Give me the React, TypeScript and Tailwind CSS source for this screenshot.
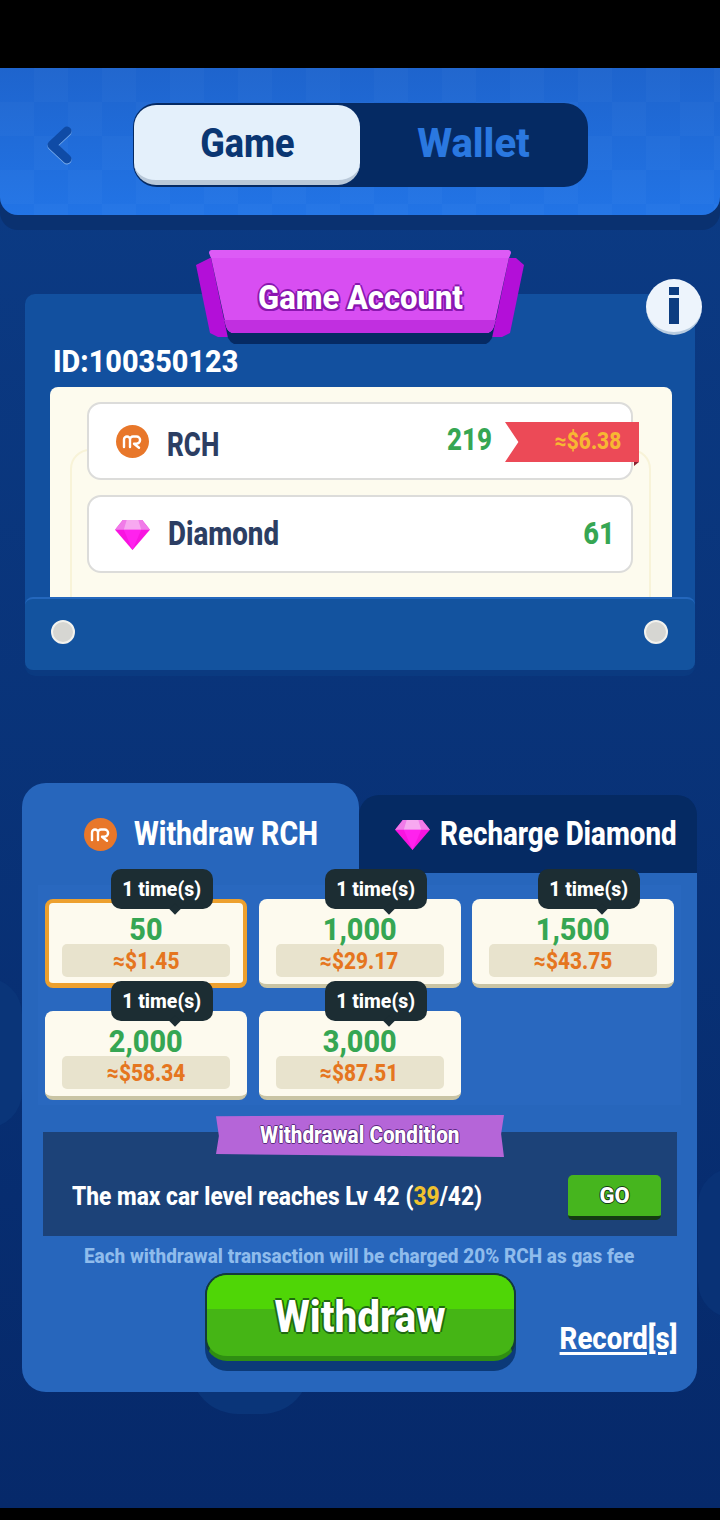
import React from 'react';

const tiers = [
  { amount: '50', usd: '≈$1.45', selected: true },
  { amount: '1,000', usd: '≈$29.17' },
  { amount: '1,500', usd: '≈$43.75' },
  { amount: '2,000', usd: '≈$58.34' },
  { amount: '3,000', usd: '≈$87.51' },
];

function RchIcon() {
  return (
    <svg width="33" height="33" viewBox="0 0 33 33" className="shrink-0">
      <circle cx="16.5" cy="16.5" r="16.5" fill="#e8772a" />
      <path d="M8 22V14.5a3 3 0 0 1 6 0V22M14 14.5a3 3 0 0 1 3-3h3.5a3.6 3.6 0 0 1 0 7.2H18l5 4" fill="none" stroke="#fff" strokeWidth="2.4" strokeLinecap="round" strokeLinejoin="round" />
    </svg>
  );
}

function DiamondIcon() {
  return (
    <svg width="35" height="31" viewBox="0 0 36 32" className="shrink-0">
      <path d="M8 1h20l8 10-18 21L0 11z" fill="#f814e0" />
      <path d="M8 1h20l8 10H0z" fill="#f07be8" />
      <path d="M12 1h12l3 10H9z" fill="#f7a8f0" />
      <path d="M9 11h18l-9 21z" fill="#ff22ee" />
    </svg>
  );
}

function TierCard({ amount, usd, selected }: { amount: string; usd: string; selected?: boolean }) {
  return (
    <div className={`relative h-[89px] rounded-[8px] bg-[#fdfaee] ${selected ? 'border-[4px] border-b-[5px] border-[#eda02e]' : 'border-b-[4px] border-[#c9c4a4]'}`}>
      <div className={`absolute w-[102px] h-[40px] rounded-[10px] bg-[#1c2d33] flex items-center justify-center text-white text-[20px] ${selected ? 'left-[62px] -top-[34px]' : 'left-[66px] -top-[30px]'}`}>
        <span className="inline-block whitespace-nowrap scale-x-[.97]">1 time(s)</span>
        <div className="absolute left-[60px] -bottom-[4px] w-[8px] h-[8px] rotate-45 bg-[#1c2d33]" />
      </div>
      <div className={`flex flex-col items-center ${selected ? 'pt-[12px] px-[13px]' : 'pt-[16px] px-[17px]'}`}>
        <div className="h-[29px] leading-[29px] text-[31px] text-[#36a653] scale-x-[.93]">{amount}</div>
        <div className="w-full h-[33px] rounded-[5px] bg-[#e8e3cd] flex items-center justify-center text-[24px] text-[#e5761f]">
          <span className="inline-block whitespace-nowrap scale-x-[.87]">{usd}</span>
        </div>
      </div>
    </div>
  );
}

export default function App() {
  return (
    <div className="w-[720px] h-[1520px] bg-black flex flex-col overflow-hidden font-['Roboto',sans-serif] font-extrabold">
      <div className="h-[68px] shrink-0" />
      <div className="relative flex-1 bg-gradient-to-b from-[#0c3c86] to-[#06296a] overflow-hidden">
        {/* faint round shapes behind the cards */}
        <div className="absolute left-[190px] top-[1250px] w-[120px] h-[96px] rounded-full bg-[#0a3579]" />
        <div className="absolute -left-[50px] top-[910px] w-[72px] h-[150px] rounded-full bg-[#0a3579]" />
        <div className="absolute -right-[50px] top-[1100px] w-[72px] h-[150px] rounded-full bg-[#093276]" />

        {/* header */}
        <div className="relative h-[147px] rounded-b-[18px] bg-gradient-to-b from-[#1e64cd] to-[#2274e6] shadow-[0_15px_0_#0a3170] flex items-center pl-[44px] pt-[6px]">
          <div className="absolute inset-0 rounded-b-[18px] bg-[repeating-conic-gradient(#ffffff05_0_25%,#ffffff00_0_50%)] bg-[length:68px_68px]" />
          <svg width="30" height="42" viewBox="0 0 30 42" className="relative shrink-0">
            <path d="M23 7 8 21l15 14" fill="none" stroke="#7db0ee" strokeWidth="9" strokeLinecap="round" strokeLinejoin="round" transform="translate(0 1)" />
            <path d="M23 7 8 21l15 14" fill="none" stroke="#0f4ba6" strokeWidth="9" strokeLinecap="round" strokeLinejoin="round" />
          </svg>
          <div className="relative ml-[59px] w-[455px] h-[84px] rounded-[24px] bg-[#052a63] px-[1px] py-[2px] flex text-[40px]">
            <div className="w-[226px] h-[80px] rounded-[22px] bg-[#e4f0fb] border-b-[5px] border-[#b9c8d8] flex items-center justify-center pt-[3px] text-[#0a3672]">
              <span className="inline-block scale-x-[.9]">Game</span>
            </div>
            <div className="flex-1 flex items-center justify-center pb-[2px] text-[#2a78e0]">Wallet</div>
          </div>
        </div>

        {/* game account */}
        <div className="relative mx-[25px] mt-[79px] rounded-[10px] bg-[#12509f] shadow-[0_6px_0_#0a3a80]">
          <div className="absolute left-[171px] -top-[44px] w-[328px] h-[96px]">
            <svg width="328" height="96" viewBox="0 0 328 96" className="absolute inset-0">
              <path d="M0 15 14 8h306l8 7-14 68-8 4H22l-8-4z" fill="#b30fd8" />
              <path d="M14 3l18 85q2 4 6 6h252q4-2 6-6l18-85z" fill="#052a63" />
              <path d="M14 3q0-3 3-3h294q3 0 3 3l-16 73q-1 5-6 7H36q-5-2-6-7z" fill="#d84ef2" />
              <path d="M15 8h298l2-5q0-3-3-3H16q-3 0-3 3z" fill="#dd5bf6" />
              <path d="M28 70h272l-2 6q-1 5-6 7H36q-5-2-6-7z" fill="#c12fe0" />
            </svg>
            <div className="absolute left-0 right-0 top-[27px] flex justify-center text-white text-[34px] leading-[40px] [text-shadow:2px_0_0_#8a16b0,-2px_0_0_#8a16b0,0_2px_0_#8a16b0,0_-2px_0_#8a16b0,2px_2px_0_#8a16b0,-2px_2px_0_#8a16b0]">
              <span className="inline-block whitespace-nowrap scale-x-[.91]">Game Account</span>
            </div>
          </div>
          <div className="absolute right-[-7px] -top-[15px] w-[56px] h-[56px] rounded-full bg-[#edf4fc] border-b-[3px] border-[#b8cce0] flex items-center justify-center">
            <div className="flex flex-col items-center gap-[3px]">
              <div className="w-[10px] h-[8px] bg-[#0d3d80]" />
              <div className="w-[10px] h-[26px] bg-[#0d3d80]" />
            </div>
          </div>

          <div className="h-[93px] pl-[28px] pt-[50px] text-white text-[31px] leading-[36px]">
            <span className="inline-block origin-left scale-x-[.93]">ID:100350123</span>
          </div>

          <div className="relative ml-[25px] mr-[23px] h-[210px] rounded-t-[8px] bg-[#fdfbee] overflow-hidden">
            <div className="absolute left-[20px] right-[21px] top-[62px] -bottom-[20px] rounded-[20px] border-[2px] border-[#f8f3d8]" />
            <div className="relative ml-[37px] w-[546px] pt-[15px] flex flex-col gap-[15px]">
              <div className="relative h-[78px] rounded-[14px] bg-white border-[2px] border-[#dcdcda] flex items-center pl-[27px]">
                <RchIcon />
                <span className="ml-[18px] text-[33px] text-[#2c3e63] pt-[7px] inline-block origin-left scale-x-[.79]">RCH</span>
              </div>
              <div className="h-[78px] rounded-[14px] bg-white border-[2px] border-[#dcdcda] flex items-center pl-[26px] pr-[16px]">
                <DiamondIcon />
                <span className="ml-[18px] text-[33px] text-[#2c3e63] inline-block origin-left scale-x-[.84]">Diamond</span>
                <span className="ml-auto text-[31px] text-[#36a653] inline-block origin-right scale-x-[.88]">61</span>
              </div>
            </div>
            <div className="absolute left-[397px] top-[38px] text-[31px] leading-[30px] text-[#36a653] origin-left scale-x-[.84]">219</div>
            <div className="absolute left-[455px] top-[35px] w-[134px] h-[40px] bg-[#ec4a57] [clip-path:polygon(0_0,100%_0,100%_100%,0_100%,10%_50%)] flex items-center justify-end pr-[18px] text-[23px] text-[#f7b733]">
              <span className="inline-block origin-right scale-x-[.91]">≈$6.38</span>
            </div>
            <div className="absolute left-[584px] top-[75px] w-[5px] h-[4px] bg-[#8a2030] [clip-path:polygon(0_0,100%_0,0_100%)]" />
          </div>

          <div className="h-[73px] rounded-[8px] bg-[#13539f] border-t-[2px] border-[#2467bd] shadow-[0_3px_0_#0b3a80] flex items-center justify-between pl-[26px] pr-[27px] pb-[6px]">
            <div className="w-[24px] h-[24px] rounded-full bg-[#d6d6d2] border-[2px] border-[#f2f2ee]" />
            <div className="w-[24px] h-[24px] rounded-full bg-[#d6d6d2] border-[2px] border-[#f2f2ee]" />
          </div>
        </div>

        {/* withdraw / recharge */}
        <div className="relative ml-[22px] mt-[113px] w-[675px]">
          <div className="flex h-[90px] items-end">
            <div className="w-[338px] h-[90px] rounded-t-[24px] bg-[#2766bc] flex items-center pl-[62px] gap-[17px] pt-[12px] text-white text-[33px]">
              <RchIcon />
              <span className="inline-block whitespace-nowrap origin-left scale-x-[.86]">Withdraw RCH</span>
            </div>
            <div className="w-[338px] h-[78px] rounded-t-[20px] bg-[#052a63] flex items-center pl-[36px] gap-[10px] text-white text-[33px]">
              <DiamondIcon />
              <span className="inline-block whitespace-nowrap origin-left scale-x-[.84]">Recharge Diamond</span>
            </div>
          </div>

          <div className="h-[519px] rounded-b-[24px] bg-[#2766bc] flex flex-col">
            <div className="mx-[16px] mt-[12px] pt-[14px] px-[7px] h-[220px] bg-[#2968bf]">
              <div className="grid grid-cols-3 gap-x-[11.5px] gap-y-[23px]">
                {tiers.map((t) => (
                  <TierCard key={t.amount} amount={t.amount} usd={t.usd} selected={t.selected} />
                ))}
              </div>
            </div>

            <div className="relative ml-[21px] mr-[20px] mt-[27px] h-[104px] bg-[#1c4278] flex items-center pl-[29px] pr-[16px]">
              <div className="absolute left-[173px] -top-[17px] w-[288px] h-[42px] bg-[#b565d8] [clip-path:polygon(0_3%,100%_0,99%_45%,100%_100%,0_93%,1%_50%)] flex items-center justify-center text-white text-[23px] [text-shadow:1px_0_0_#5c2a80,-1px_0_0_#5c2a80,0_1px_0_#5c2a80,0_-1px_0_#5c2a80]">
                <span className="inline-block whitespace-nowrap scale-x-[.9]">Withdrawal Condition</span>
              </div>
              <div className="pt-[26px] text-white text-[25px] whitespace-nowrap origin-left scale-x-[.91]">
                The max car level reaches Lv 42 (<span className="text-[#f0c22e]">39</span>/42)
              </div>
              <div className="ml-auto mt-[26px] w-[93px] h-[45px] rounded-[5px] bg-[#46b51e] border-b-[4px] border-[#143c12] flex items-center justify-center text-white text-[22px] [text-shadow:1px_0_0_#143c12,-1px_0_0_#143c12,0_1px_0_#143c12,0_-1px_0_#143c12]">GO</div>
            </div>

            <div className="mt-[8px] flex justify-center text-[#8fbcec] text-[21px] leading-[24px]">
              <span className="inline-block whitespace-nowrap scale-x-[.905]">Each withdrawal transaction will be charged 20% RCH as gas fee</span>
            </div>

            <div className="mt-[5px] grid grid-cols-[183px_311px_1fr] items-start">
              <div />
              <div className="h-[98px] rounded-[22px] bg-[#0c3a78]">
                <div className="relative h-[88px] rounded-[22px] bg-[#45b515] border-[2px] border-[#143c3a] border-b-[5px] border-b-[#2f8e12] overflow-hidden flex items-center justify-center">
                  <div className="absolute left-0 right-0 top-0 h-[34px] bg-[#4fd606]" />
                  <span className="relative pt-[3px] text-white text-[44px] inline-block scale-x-[.92] [text-shadow:2px_0_0_#1f6a10,-2px_0_0_#1f6a10,0_2px_0_#1f6a10,0_-2px_0_#1f6a10]">Withdraw</span>
                </div>
              </div>
              <div className="justify-self-end mr-[20px] mt-[48px] text-white text-[31px] leading-[36px] underline decoration-[3px] underline-offset-[3px] whitespace-nowrap origin-right scale-x-[.89]">Record[s]</div>
            </div>
          </div>
        </div>
      </div>
      <div className="h-[12px] shrink-0" />
    </div>
  );
}
